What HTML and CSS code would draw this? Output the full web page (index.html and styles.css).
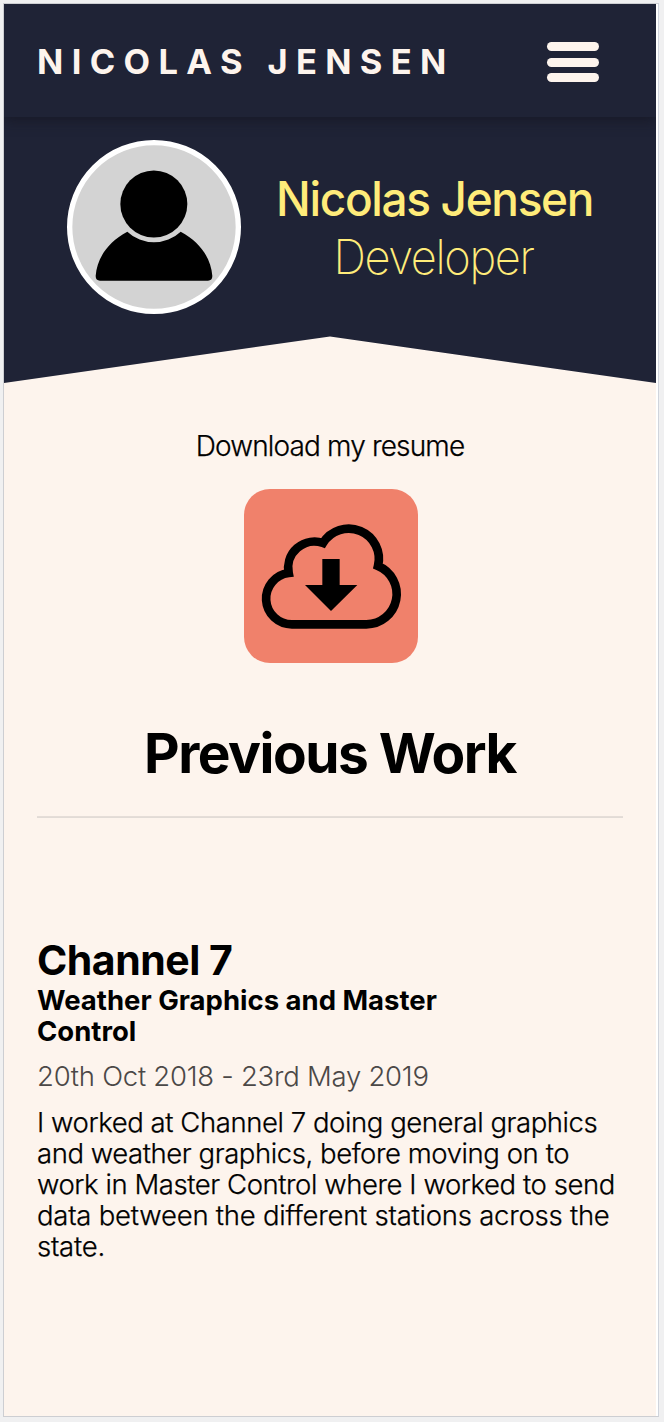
FILE: index.html
```html
<!DOCTYPE html>
<html lang="en">
<head>
<meta charset="utf-8">
<title>Nicolas Jensen</title>
<link rel="stylesheet" href="styles.css">
</head>
<body>
<div class="page">
  <header class="nav">
    <div class="brand">NICOLAS JENSEN</div>
    <div class="menu"><span></span><span></span><span></span></div>
  </header>
  <section class="hero">
    <svg class="avatar" viewBox="80 58 522 522">
      <circle cx="341" cy="319" r="253" fill="#d3d3d3" stroke="#fff" stroke-width="16"/>
      <circle cx="340.500" cy="250" r="100.500"/>
      <path d="M261 333A116 116 0 0 0 421 333C482 365 512 415 516 466Q516 480 503 480H179Q166 480 166 466C170 415 200 365 261 333Z"/>
    </svg>
    <div class="intro">
      <h1 class="name">Nicolas Jensen</h1>
      <p class="role">Developer</p>
    </div>
  </section>
  <main>
    <section class="resume">
      <p class="resume-label">Download my resume</p>
      <a class="download">
        <svg viewBox="42 27 522 522">
          <path d="M186 433A77.300 77.300 0 0 1 176 279A79 79 0 0 1 279 189A90.500 90.500 0 0 1 444 258A91 91 0 0 1 409 433Z" fill="none" stroke="#000" stroke-width="26"/>
          <path d="M277 237H329V315H382L303 393L225 315H277Z"/>
        </svg>
      </a>
    </section>
    <h2 class="heading">Previous Work</h2>
    <hr class="rule">
    <article class="job">
      <h3 class="company">Channel 7</h3>
      <h4 class="position">Weather Graphics and Master Control</h4>
      <p class="dates">20th Oct 2018 - 23rd May 2019</p>
      <p class="description">I worked at Channel 7 doing general graphics and weather graphics, before moving on to work in Master Control where I worked to send <span class="loose">data between the different stations across the state.</span></p>
    </article>
  </main>
</div>
</body>
</html>
```
FILE: styles.css
```css
* { box-sizing: border-box; margin: 0; padding: 0; }
body {
  background: #f0f0f1;
  color: #000;
  font-family: Inter, "Liberation Sans", sans-serif;
  padding: 3px;
}
.page {
  width: 656px;
  height: 1414px;
  border: 1px solid #cdced2;
  border-right-color: #d0d4dc;
  background: linear-gradient(to right, #fdf4ed 652px, #fff 652px);
  overflow: hidden;
}
.nav {
  position: relative;
  z-index: 1;
  width: 652px;
  height: 113px;
  padding: 0 57px 0 33px;
  display: flex;
  align-items: center;
  justify-content: space-between;
  background: #1f2336;
  box-shadow: 0 3px 12px rgba(20, 20, 30, .65);
  clip-path: inset(0 0 -20px 0);
}
.brand {
  font-size: 34.5px;
  line-height: 42px;
  font-weight: 700;
  letter-spacing: 8.35px;
  color: #fdf4ed;
  white-space: nowrap;
  padding-top: 3px;
}
.menu {
  width: 52px;
  display: flex;
  flex-direction: column;
  gap: 6.7px;
  padding-top: 3px;
}
.menu span { height: 9px; border-radius: 5px; background: #fdf4ed; }
.hero {
  width: 652px;
  height: 266px;
  padding: 22.500px 0 0 62.500px;
  display: flex;
  gap: 36px;
  background: #1f2336;
  clip-path: polygon(0 0, 100% 0, 100% 100%, 50% 219.500px, 0 100%);
}
.avatar { width: 174px; height: 174px; flex: none; }
.intro {
  width: 316px;
  padding-top: 30.500px;
  display: flex;
  flex-direction: column;
  align-items: center;
  color: #ffec7a;
  white-space: nowrap;
}
.name { font-size: 48px; line-height: 58px; font-weight: 500; letter-spacing: -1.4px; transform: scaleX(.957); }
.role { font-size: 48px; line-height: 58px; font-weight: 200; letter-spacing: -1.4px; padding-right: 2px; transform: scaleX(.94); }
main { width: 652px; padding: 46px 33px 0; }
.resume { display: flex; flex-direction: column; align-items: center; }
.resume-label { font-size: 28px; line-height: 34px; font-weight: 300; letter-spacing: -.85px; -webkit-text-stroke: .25px #000; }
.download {
  width: 174px;
  height: 174px;
  margin: 25.500px 0 0 2px;
  border-radius: 26px;
  background: #f0816b;
}
.download svg { display: block; width: 174px; height: 174px; }
.heading {
  margin-top: 57px;
  font-size: 55px;
  line-height: 66px;
  font-weight: 700;
  letter-spacing: -1.500px;
  text-align: center;
  white-space: nowrap;
}
.rule { height: 2px; margin-top: 30px; border: 0; border-top: 1px solid #e5ddd8; border-bottom: 1px solid #e1dbd6; }
.job { padding-top: 117px; }
.company { font-size: 41px; line-height: 50px; font-weight: 700; letter-spacing: -.5px; }
.position { width: 430px; font-size: 27.500px; line-height: 31px; font-weight: 700; }
.dates { margin-top: 14px; font-size: 27.500px; line-height: 31px; font-weight: 300; color: #4b4847; letter-spacing: -.25px; white-space: nowrap; }
.description { margin-top: 15px; width: 590px; font-size: 27.500px; line-height: 31.200px; font-weight: 300; letter-spacing: -.43px; -webkit-text-stroke: .25px #000; }
.loose { letter-spacing: -.23px; }
```
